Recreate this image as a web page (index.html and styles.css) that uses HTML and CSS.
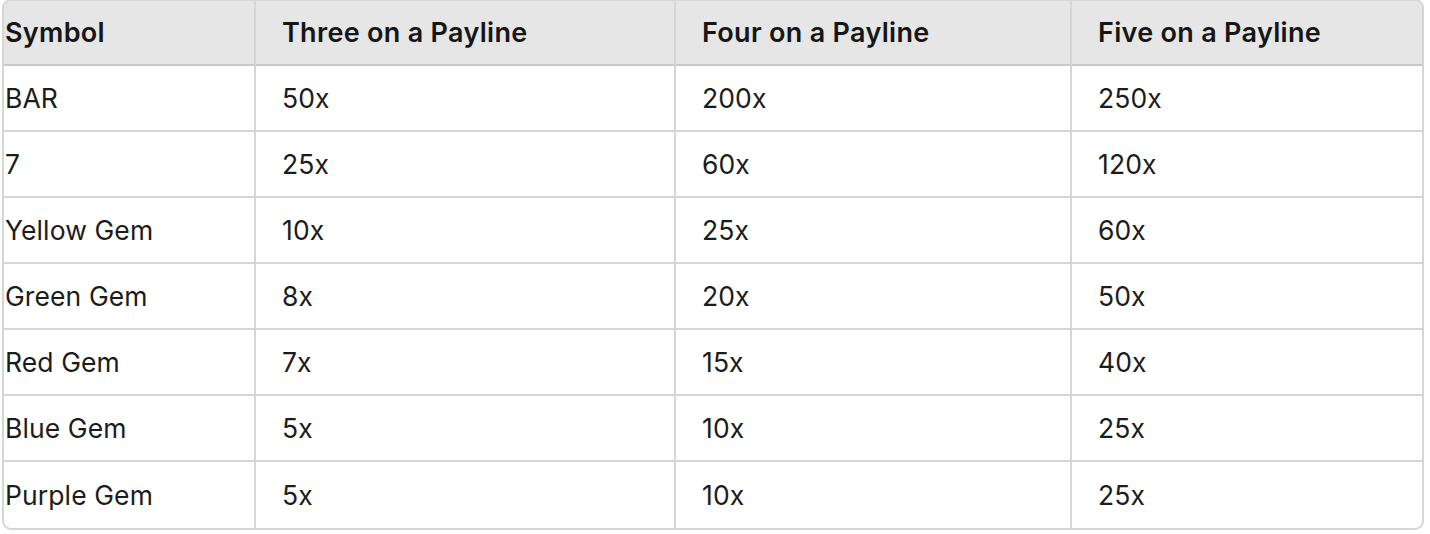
FILE: index.html
```html
<!DOCTYPE html>
<html>
<head>
<meta charset="utf-8">
<link rel="stylesheet" href="styles.css">
</head>
<body>
<div class="wrap">
<table class="pay">
<colgroup><col class="c1"><col class="c2"><col class="c3"><col class="c4"></colgroup>
<thead>
<tr><th>Symbol</th><th>Three on a Payline</th><th>Four on a Payline</th><th>Five on a Payline</th></tr>
</thead>
<tbody>
<tr><td>BAR</td><td>50x</td><td>200x</td><td>250x</td></tr>
<tr><td>7</td><td>25x</td><td>60x</td><td>120x</td></tr>
<tr><td>Yellow Gem</td><td>10x</td><td>25x</td><td>60x</td></tr>
<tr><td>Green Gem</td><td>8x</td><td>20x</td><td>50x</td></tr>
<tr><td>Red Gem</td><td>7x</td><td>15x</td><td>40x</td></tr>
<tr><td>Blue Gem</td><td>5x</td><td>10x</td><td>25x</td></tr>
<tr><td>Purple Gem</td><td>5x</td><td>10x</td><td>25x</td></tr>
</tbody>
</table>
</div>
</body>
</html>
```
FILE: styles.css
```css
html, body {
  margin: 0;
  padding: 0;
  background: #ffffff;
}
body {
  font-family: Inter, "Liberation Sans", sans-serif;
  color: #1c1c1c;
}
.wrap {
  box-sizing: border-box;
  margin-left: 2px;
  margin-top: -1px;
  width: 1422px;
  border: 2px solid #d6d6d6;
  border-radius: 9px;
  overflow: hidden;
}
.pay {
  width: 1418px;
  table-layout: fixed;
  border-collapse: separate;
  border-spacing: 0;
}
.c1 { width: 252px; }
.c2 { width: 420px; }
.c3 { width: 396px; }
.c4 { width: 350px; }
.pay th,
.pay td {
  box-sizing: border-box;
  height: 66px;
  padding: 0 0 0 26px;
  text-align: left;
  font-size: 26.5px;
  letter-spacing: 0.1px;
  border-right: 2px solid #d6d6d6;
  border-bottom: 2px solid #d6d6d6;
}
.pay th {
  background: #e6e6e6;
  font-weight: 600;
  font-size: 27px;
  letter-spacing: 0.3px;
  color: #161616;
  height: 65px;
  border-bottom-color: #c8c8c8;
}
.pay th:first-child,
.pay td:first-child {
  padding-left: 1px;
}
.pay th:last-child,
.pay td:last-child {
  border-right: none;
}
.pay tbody tr:last-child td {
  border-bottom: none;
}
```
